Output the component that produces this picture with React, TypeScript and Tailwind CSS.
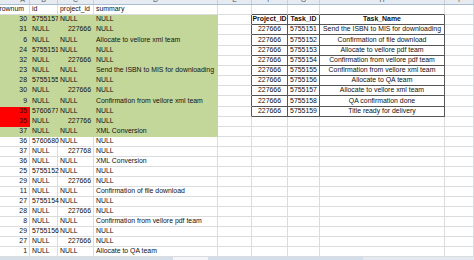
const GREEN = 'bg-[#c4d79b]';

const rows = [
  ['30', '5755157', 'NULL', 'NULL'],
  ['31', 'NULL', '227666', 'NULL'],
  ['6', 'NULL', 'NULL', 'Allocate to vellore xml team'],
  ['24', '5755151', 'NULL', 'NULL'],
  ['32', 'NULL', '227666', 'NULL'],
  ['23', 'NULL', 'NULL', 'Send the ISBN to MIS for downloading'],
  ['28', '5755155', 'NULL', 'NULL'],
  ['30', 'NULL', '227666', 'NULL'],
  ['9', 'NULL', 'NULL', 'Confirmation from vellore xml team'],
  ['35', '5760677', 'NULL', 'NULL'],
  ['35', 'NULL', '227766', 'NULL'],
  ['37', 'NULL', 'NULL', 'XML Conversion'],
  ['36', '5760680', 'NULL', 'NULL'],
  ['37', 'NULL', '227768', 'NULL'],
  ['36', 'NULL', 'NULL', 'XML Conversion'],
  ['25', '5755152', 'NULL', 'NULL'],
  ['29', 'NULL', '227666', 'NULL'],
  ['11', 'NULL', 'NULL', 'Confirmation of file download'],
  ['27', '5755154', 'NULL', 'NULL'],
  ['28', 'NULL', '227666', 'NULL'],
  ['8', 'NULL', 'NULL', 'Confirmation from vellore pdf team'],
  ['29', '5755156', 'NULL', 'NULL'],
  ['27', 'NULL', '227666', 'NULL'],
  ['1', 'NULL', 'NULL', 'Allocate to QA team'],
];

const tasks = [
  ['227666', '5755151', 'Send the ISBN to MIS for downloading'],
  ['227666', '5755152', 'Confirmation of file download'],
  ['227666', '5755153', 'Allocate to vellore pdf team'],
  ['227666', '5755154', 'Confirmation from vellore pdf team'],
  ['227666', '5755155', 'Confirmation from vellore xml team'],
  ['227666', '5755156', 'Allocate to QA team'],
  ['227666', '5755157', 'Allocate to vellore xml team'],
  ['227666', '5755158', 'QA confirmation done'],
  ['227666', '5755159', 'Title ready for delivery'],
];

const cols = 'grid grid-cols-[30px_28px_36px_124px_34px_36px_32px_125px_1fr]';
const letters = ['A', 'B', 'C', 'D', 'E', 'F', 'G', 'H', 'I'];

function Cell({ children, className = '' }: { children?: React.ReactNode; className?: string }) {
  return (
    <div className={`flex items-center overflow-visible whitespace-nowrap border-b border-r px-[2px] ${className}`}>
      {children}
    </div>
  );
}

export default function App() {
  return (
    <div className="w-[474px] h-[260px] overflow-hidden bg-white text-[#111] text-[6.9px] leading-none" style={{ fontFamily: '"Liberation Sans", Arial, sans-serif' }}>
      {/* column letters, mostly scrolled out of view */}
      <div className={`${cols} h-[5px] overflow-hidden bg-[#e6ebf1] border-b border-[#a9bdd3]`}>
        {letters.map((l, i) => (
          <div key={l} className={`flex justify-center border-r border-[#c6d1dd] text-[#555] text-[7px] leading-[7px] -mt-[4px] ${i === 0 ? 'pl-[16px]' : ''}`}>
            {l}
          </div>
        ))}
      </div>

      {/* field names */}
      <div className={`${cols} h-[10px]`}>
        <Cell className="border-[#dadcdd] justify-end pr-[5px]">rownum</Cell>
        <Cell className="border-[#dadcdd]">id</Cell>
        <Cell className="border-[#dadcdd]">project_id</Cell>
        <Cell className="border-[#dadcdd]">summary</Cell>
        <Cell className="border-[#dadcdd]" />
        <Cell className="border-[#dadcdd] border-b-[#555]" />
        <Cell className="border-[#dadcdd] border-b-[#555]" />
        <Cell className="border-[#dadcdd] border-b-[#555]" />
        <Cell className="border-[#dadcdd]" />
      </div>

      {rows.map((r, i) => {
        const green = i < 12;
        const red = i === 9 || i === 10;
        const h = i === 2 || i === 8 ? 'h-[11px]' : 'h-[10px]';
        const fill = green ? `${GREEN} border-[#c4d79b]` : 'border-[#dadcdd]';
        const inTable = i < 10;
        const t = inTable && i > 0 ? tasks[i - 1] : null;
        const tb = 'border-[#555] justify-center';
        return (
          <div key={i} className={`${cols} ${h}`}>
            <Cell className={`justify-end ${red ? 'bg-[#ff0000] border-[#ff0000] text-[#4a0000]' : fill}`}>{r[0]}</Cell>
            <Cell className={fill}>{r[1]}</Cell>
            <Cell className={`${fill} ${r[2] === 'NULL' ? '' : 'justify-end'}`}>{r[2]}</Cell>
            <Cell className={fill}>{r[3]}</Cell>
            <Cell className={`border-[#dadcdd] ${inTable ? 'border-r-[#555]' : ''}`} />
            {inTable ? (
              t ? (
                <>
                  <Cell className={tb}>{t[0]}</Cell>
                  <Cell className={tb}>{t[1]}</Cell>
                  <Cell className={tb}>{t[2]}</Cell>
                </>
              ) : (
                <>
                  <Cell className={`${tb} font-bold`}>Project_ID</Cell>
                  <Cell className={`${tb} font-bold`}>Task_ID</Cell>
                  <Cell className={`${tb} font-bold`}>Task_Name</Cell>
                </>
              )
            ) : (
              <>
                <Cell className="border-[#dadcdd]" />
                <Cell className="border-[#dadcdd]" />
                <Cell className="border-[#dadcdd]" />
              </>
            )}
            <Cell className="border-[#dadcdd]" />
          </div>
        );
      })}

      {/* sheet tab strip */}
      <div className="flex h-[3px]">
        <div className="w-[173px] bg-[#d5dfea]" />
        <div className="w-[35px] bg-[#f3f5f8]" />
        <div className="w-[155px] bg-[#d2ddea]" />
        <div className="flex-1 bg-[#e2e9f1]" />
      </div>
    </div>
  );
}
